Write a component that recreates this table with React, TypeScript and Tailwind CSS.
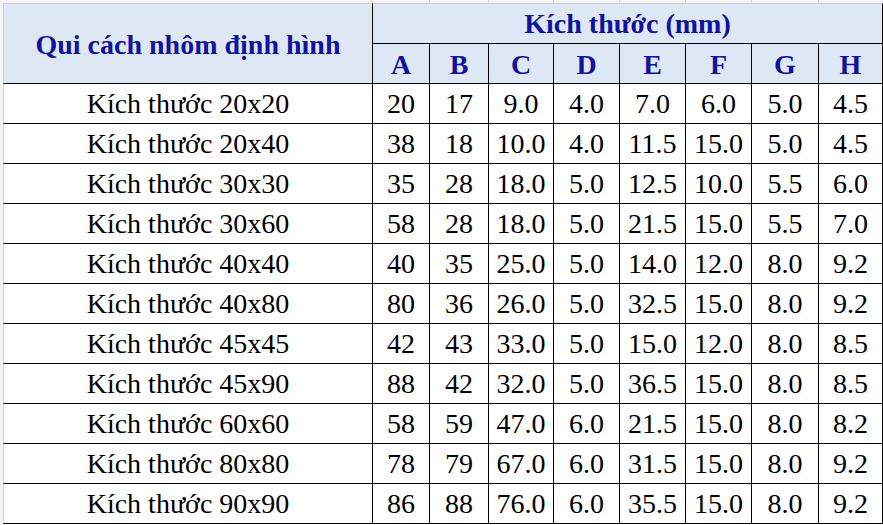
const rows: [string, string[]][] = [
  ['20x20', ['20', '17', '9.0', '4.0', '7.0', '6.0', '5.0', '4.5']],
  ['20x40', ['38', '18', '10.0', '4.0', '11.5', '15.0', '5.0', '4.5']],
  ['30x30', ['35', '28', '18.0', '5.0', '12.5', '10.0', '5.5', '6.0']],
  ['30x60', ['58', '28', '18.0', '5.0', '21.5', '15.0', '5.5', '7.0']],
  ['40x40', ['40', '35', '25.0', '5.0', '14.0', '12.0', '8.0', '9.2']],
  ['40x80', ['80', '36', '26.0', '5.0', '32.5', '15.0', '8.0', '9.2']],
  ['45x45', ['42', '43', '33.0', '5.0', '15.0', '12.0', '8.0', '8.5']],
  ['45x90', ['88', '42', '32.0', '5.0', '36.5', '15.0', '8.0', '8.5']],
  ['60x60', ['58', '59', '47.0', '6.0', '21.5', '15.0', '8.0', '8.2']],
  ['80x80', ['78', '79', '67.0', '6.0', '31.5', '15.0', '8.0', '9.2']],
  ['90x90', ['86', '88', '76.0', '6.0', '35.5', '15.0', '8.0', '9.2']],
];

const letters = ['A', 'B', 'C', 'D', 'E', 'F', 'G', 'H'];

const App = () => {
  return (
    <div className="w-[883px] h-[525px] bg-white overflow-hidden [font-family:'Liberation_Serif','Times_New_Roman',serif]">
      {/* spreadsheet gridlines above the table */}
      <div className="h-[3px] grid grid-cols-[3px_370px_57px_59px_65px_66px_66px_66px_67px_64px] bg-[#f4f4f4]">
        <div />
        <div className="border-r border-[#d6d6d6]" />
        <div className="border-r border-[#d6d6d6]" />
        <div className="border-r border-[#d6d6d6]" />
        <div className="border-r border-[#d6d6d6]" />
        <div className="border-r border-[#d6d6d6]" />
        <div className="border-r border-[#d6d6d6]" />
        <div className="border-r border-[#d6d6d6]" />
        <div className="border-r border-[#d6d6d6]" />
        <div />
      </div>
      <div className="flex">
        <div className="w-[3px] h-[522px] bg-[#f4f4f4]" />
        <div className="grid grid-cols-[370px_57px_59px_65px_66px_66px_66px_67px_64px] grid-rows-[41px_40px_repeat(11,40px)]">
          <div className="row-span-2 flex items-center justify-center bg-[#dde8f4] border-t border-l border-t-[#cfcfcf] border-l-[#cfcfcf] border-r border-b border-r-black border-b-black text-[#12129c] font-bold text-[28px] pt-[2px]">
            Qui cách nhôm định hình
          </div>
          <div className="col-span-8 flex items-center justify-center bg-[#dde8f4] border-t border-t-[#cfcfcf] border-r border-b border-r-black border-b-black text-[#12129c] font-bold text-[28px] pt-[1px]">
            Kích thước (mm)
          </div>
          {letters.map((l) => (
            <div
              key={l}
              className="flex items-center justify-center bg-[#dde8f4] border-r border-b border-black text-[#12129c] font-bold text-[28px] pt-[2px]"
            >
              {l}
            </div>
          ))}
          {rows.map(([name, vals]) => (
            <>
              <div
                key={name}
                className="flex items-center justify-center border-l border-l-[#cfcfcf] border-r border-b border-r-black border-b-black text-black text-[28px] pt-[1px]"
              >
                Kích thước {name}
              </div>
              {vals.map((v, i) => (
                <div
                  key={name + i}
                  className="flex items-center justify-center border-r border-b border-black text-black text-[28px] pt-[1px]"
                >
                  {v}
                </div>
              ))}
            </>
          ))}
        </div>
      </div>
    </div>
  );
};

export default App;
